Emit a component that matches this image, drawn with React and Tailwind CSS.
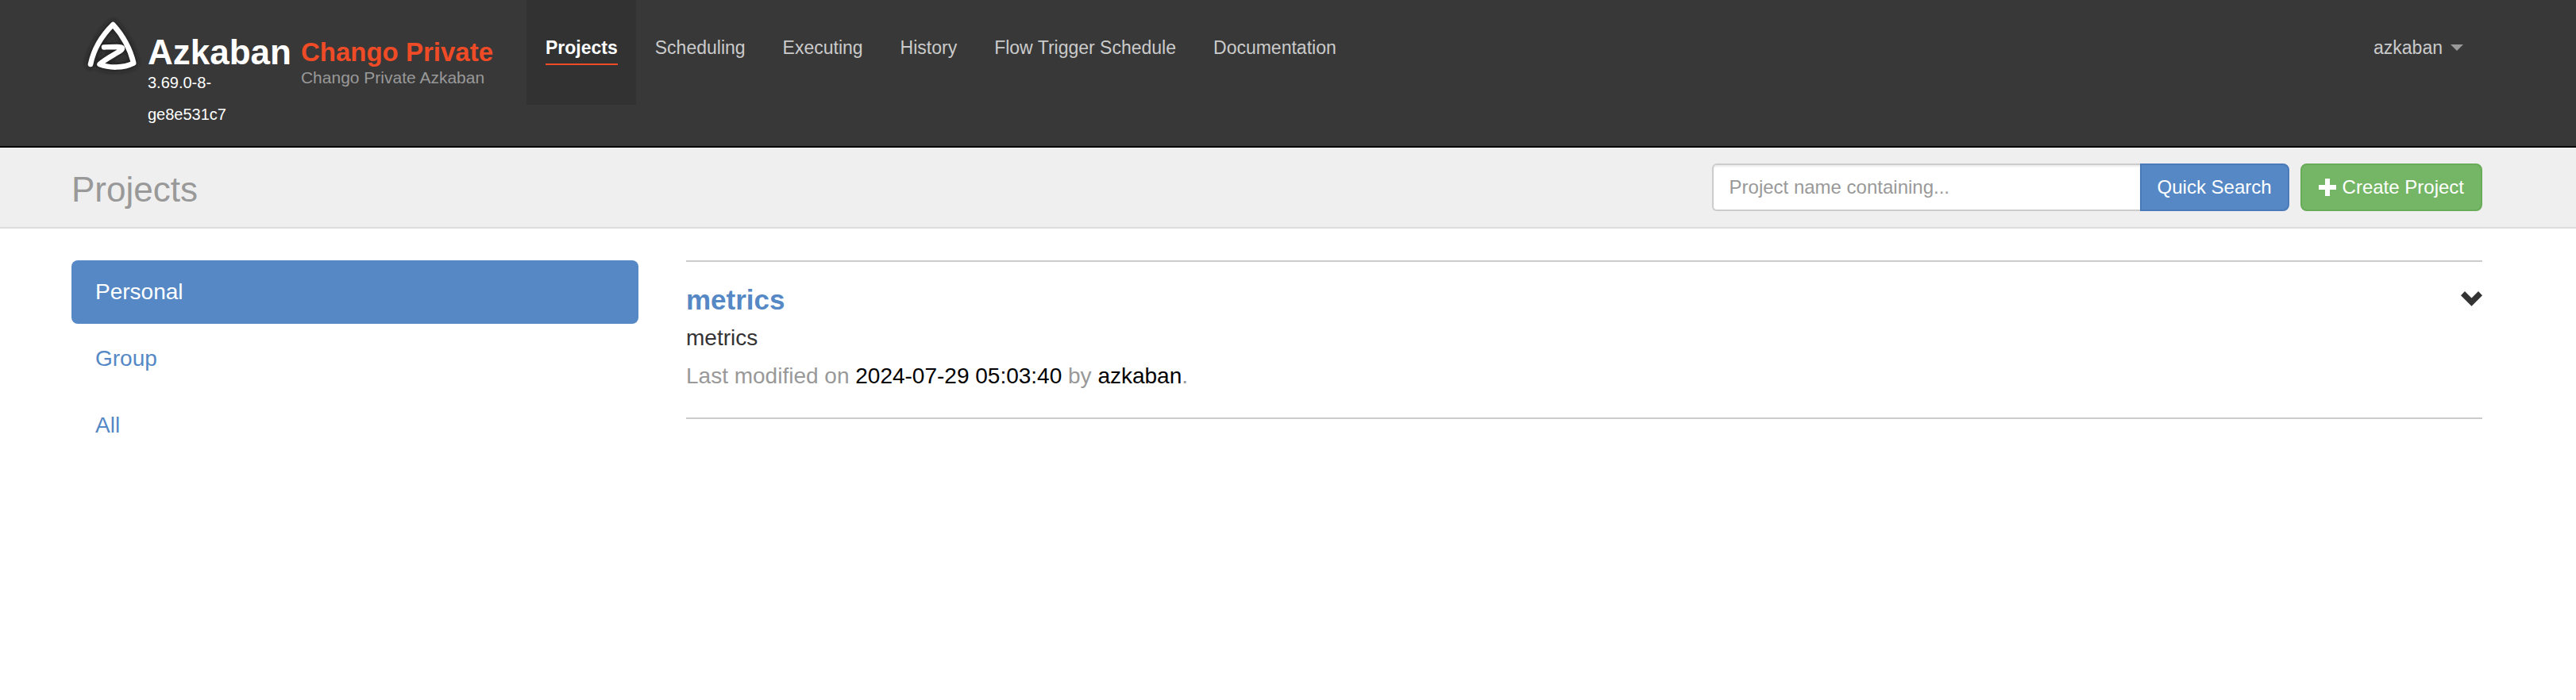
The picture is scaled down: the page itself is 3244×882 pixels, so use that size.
import React from "react";

const NAV = ["Projects", "Scheduling", "Executing", "History", "Flow Trigger Schedule", "Documentation"];
const SCOPES = ["Personal", "Group", "All"];

const LOGO_PATH =
  "M6 57C10 38 20 21 34.3 7C47 21 56 38 60.3 55.500C47 62 30 62 17.500 57C25 50 36 45 44 39.500C48 36.500 45 35 40 35C34 35 28 35 23 35.500";

function Logo() {
  return (
    <svg viewBox="0 0 66 66" className="-mt-6 size-[66px] shrink-0 overflow-visible" fill="none" aria-hidden="true">
      <defs>
        <filter id="logo-shadow" x="-20%" y="-20%" width="140%" height="140%">
          <feGaussianBlur stdDeviation="3" />
        </filter>
      </defs>
      <path
        d={LOGO_PATH}
        stroke="#1c1c1c"
        strokeWidth="9"
        strokeLinecap="round"
        strokeLinejoin="round"
        filter="url(#logo-shadow)"
      />
      <path d={LOGO_PATH} stroke="#fff" strokeWidth="6.600" strokeLinecap="round" strokeLinejoin="round" />
    </svg>
  );
}

function Header() {
  return (
    <header className="flex items-start border-b-2 border-black bg-[#383838] pr-[118px] pl-[108px]">
      <div className="flex shrink-0 items-start pt-12 pb-5">
        <Logo />
        <div className="ml-3 text-white">
          <a href="#" className="block text-[44px] leading-9 font-bold">Azkaban</a>
          <p className="text-xl leading-10">
            3.69.0-8-
            <br />
            ge8e531c7
          </p>
        </div>
        <div className="ml-3">
          <p className="text-[33px] leading-9 font-bold text-[#ee4b26]">Chango Private</p>
          <p className="text-[21px] leading-7 text-[#999999]">Chango Private Azkaban</p>
        </div>
      </div>
      <nav className="ml-[42px] flex flex-1 text-[23px] leading-10 whitespace-nowrap text-[#cbcbcb]">
        {NAV.map((item, i) => (
          <a
            key={item}
            href="#"
            className={i === 0 ? "bg-[#323232] pt-10 pr-[23px] pb-[50px] pl-6 font-bold text-white" : "pt-10 pr-[23px] pl-6"}
          >
            <span className={i === 0 ? "block border-b-2 border-[#ee4b26]" : "block"}>{item}</span>
          </a>
        ))}
      </nav>
      <button type="button" className="flex items-center gap-[10px] pt-10 pr-6 text-[23px] leading-10 text-[#cbcbcb]">
        azkaban
        <svg viewBox="0 0 16 8" className="h-2 w-4" aria-hidden="true">
          <path d="M0 0H16L8 8Z" fill="#999" />
        </svg>
      </button>
    </header>
  );
}

function Toolbar() {
  return (
    <div className="flex items-end border-b-2 border-[#dddddd] bg-[#efefef] py-5 pr-[118px] pl-[90px]">
      <h1 className="flex-1 text-[44px] leading-[54px] text-[#999999]">Projects</h1>
      <form className="flex text-2xl" onSubmit={(e) => e.preventDefault()}>
        <input
          type="text"
          aria-label="Project name containing"
          placeholder="Project name containing..."
          className="h-[60px] w-[539px] rounded-l-md border-2 border-r-0 border-[#cccccc] bg-white px-5 shadow-[inset_0_2px_2px_rgba(0,0,0,0.075)] outline-none placeholder:text-[#999999]"
        />
        <button type="submit" className="h-[60px] rounded-r-lg border-2 border-[#4a7aba] bg-[#5588c5] px-5 whitespace-nowrap text-white">
          Quick Search
        </button>
      </form>
      <button
        type="button"
        className="ml-[14px] flex h-[60px] items-center gap-2 rounded-lg border-2 border-[#68ab58] bg-[#75b666] px-[21px] text-2xl whitespace-nowrap text-white"
      >
        <svg viewBox="0 0 22 22" className="size-[22px]" aria-hidden="true">
          <path d="M8 0H14V8H22V14H14V22H8V14H0V8H8Z" fill="currentColor" />
        </svg>
        Create Project
      </button>
    </div>
  );
}

export default function App() {
  return (
    <div className="min-h-screen bg-white font-['Liberation_Sans',Arial,sans-serif] text-[#333333]">
      <Header />
      <Toolbar />
      <main className="grid grid-cols-4 gap-[60px] pt-10 pr-[118px] pl-[90px] text-[28px]">
        <nav className="flex flex-col gap-1 leading-10">
          {SCOPES.map((scope, i) => (
            <a
              key={scope}
              href="#"
              className={i === 0 ? "rounded-lg bg-[#5588c5] px-[30px] py-5 text-white" : "rounded-lg px-[30px] py-5 text-[#5588c5]"}
            >
              {scope}
            </a>
          ))}
        </nav>
        <section className="col-span-3">
          <article className="flex items-start justify-between border-y-2 border-[#cccccc] pt-6 pb-7 leading-[48px]">
            <div>
              <h2 className="text-[35px] font-bold text-[#5588c5]">
                <a href="#">metrics</a>
              </h2>
              <p>metrics</p>
              <p className="text-[#999999]">
                Last modified on <span className="text-black">2024-07-29 05:03:40</span> by{" "}
                <span className="text-black">azkaban</span>.
              </p>
            </div>
            <button type="button" aria-label="Expand metrics" className="flex h-11 items-center">
              <svg viewBox="0 0 27 19" className="h-[19px] w-[27px]" aria-hidden="true">
                <path d="M5 0L13.500 8.500L22 0L27 5.200L13.500 18.700L0 5.200Z" fill="#333" />
              </svg>
            </button>
          </article>
        </section>
      </main>
    </div>
  );
}
